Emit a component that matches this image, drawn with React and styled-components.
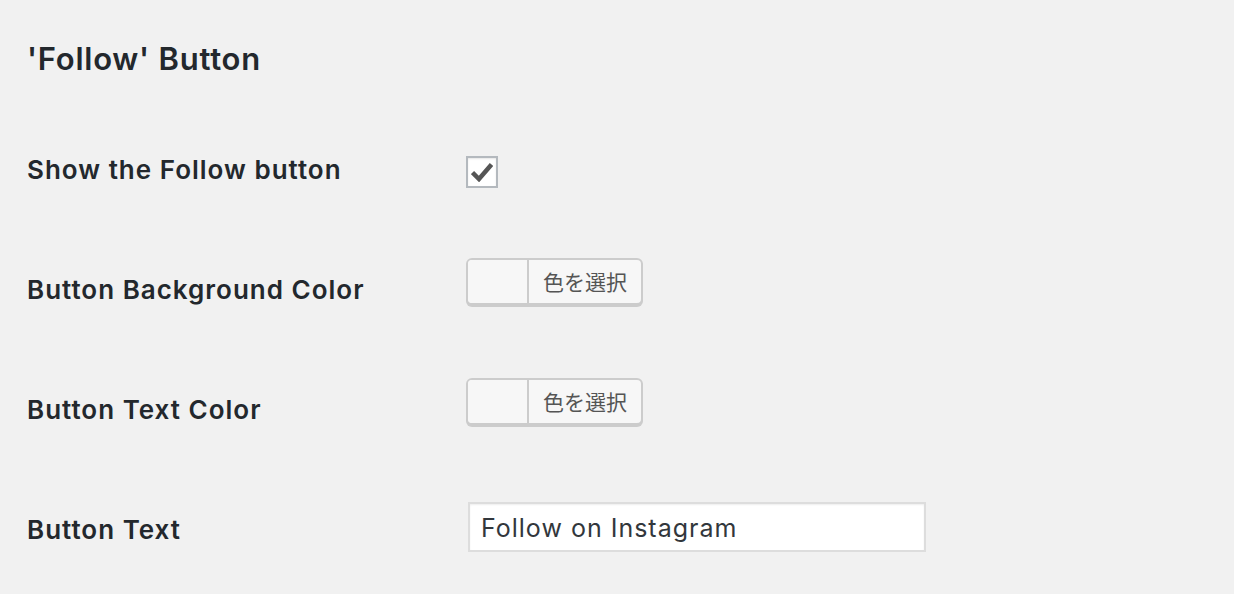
import React from 'react';
import styled, { createGlobalStyle } from 'styled-components';

const GlobalStyle = createGlobalStyle`
  html, body {
    margin: 0;
    padding: 0;
    background: #f1f1f1;
  }
  body {
    font-family: Inter, "Noto Sans", "Noto Sans CJK JP", sans-serif;
    color: #23282d;
  }
`;

const Page = styled.div`
  padding: 41px 27px 0;
  width: 1234px;
  height: 594px;
  box-sizing: border-box;
  overflow: hidden;
`;

const Title = styled.h2`
  margin: 0;
  font-size: 31px;
  line-height: 36px;
  font-weight: 600;
  letter-spacing: 0.75px;
`;

const Table = styled.div`
  margin-top: 43px;
`;

const Row = styled.div`
  display: grid;
  grid-template-columns: 439px 1fr;
  height: 120px;
  align-items: start;
`;

const Label = styled.div`
  padding-top: 35px;
  font-size: 26px;
  line-height: 30px;
  font-weight: 600;
  letter-spacing: 1px;
`;

const Checkbox = styled.span`
  margin-top: 36px;
  width: 32px;
  height: 32px;
  box-sizing: border-box;
  border: 2px solid #b4b9be;
  background: #fff;
  box-shadow: inset 0 1px 2px rgba(0, 0, 0, 0.1);
  display: flex;
  align-items: center;
  justify-content: center;
`;

const ColorButton = styled.div`
  margin-top: 18px;
  width: 177px;
  height: 47px;
  box-sizing: border-box;
  display: flex;
  border: 2px solid #ccc;
  border-radius: 6px;
  background: #f7f7f7;
  box-shadow: 0 2px 0 #ccc;
  overflow: hidden;
`;

const Swatch = styled.span`
  width: 59px;
  border-right: 2px solid #ccc;
  background: #f7f7f7;
`;

const ColorText = styled.span`
  flex: 1;
  display: flex;
  align-items: center;
  justify-content: center;
  font-family: "Noto Sans CJK JP", sans-serif;
  font-size: 21px;
  color: #555;
  padding-bottom: 2px;
`;

const TextInput = styled.input`
  margin-top: 22px;
  margin-left: 2px;
  width: 458px;
  height: 50px;
  box-sizing: border-box;
  border: 2px solid #ddd;
  background: #fff;
  box-shadow: inset 0 1px 2px rgba(0, 0, 0, 0.07);
  padding: 2px 11px 0;
  font-family: Inter, "Noto Sans", sans-serif;
  font-size: 25px;
  letter-spacing: 1px;
  color: #32373c;
  outline: none;
`;

const CheckIcon = () => (
  <svg width="22" height="20" viewBox="0 0 22 20">
    <path d="M1.5 10.5 L8 17 L20.5 2.5" fill="none" stroke="#555" strokeWidth="4.5" strokeLinejoin="miter" />
  </svg>
);

const ColorPicker = () => (
  <ColorButton>
    <Swatch />
    <ColorText>色を選択</ColorText>
  </ColorButton>
);

export default function App() {
  return (
    <Page>
      <GlobalStyle />
      <Title>'Follow' Button</Title>
      <Table>
        <Row>
          <Label>Show the Follow button</Label>
          <div>
            <Checkbox>
              <CheckIcon />
            </Checkbox>
          </div>
        </Row>
        <Row>
          <Label>Button Background Color</Label>
          <ColorPicker />
        </Row>
        <Row>
          <Label>Button Text Color</Label>
          <ColorPicker />
        </Row>
        <Row>
          <Label>Button Text</Label>
          <div>
            <TextInput defaultValue="Follow on Instagram" />
          </div>
        </Row>
      </Table>
    </Page>
  );
}
